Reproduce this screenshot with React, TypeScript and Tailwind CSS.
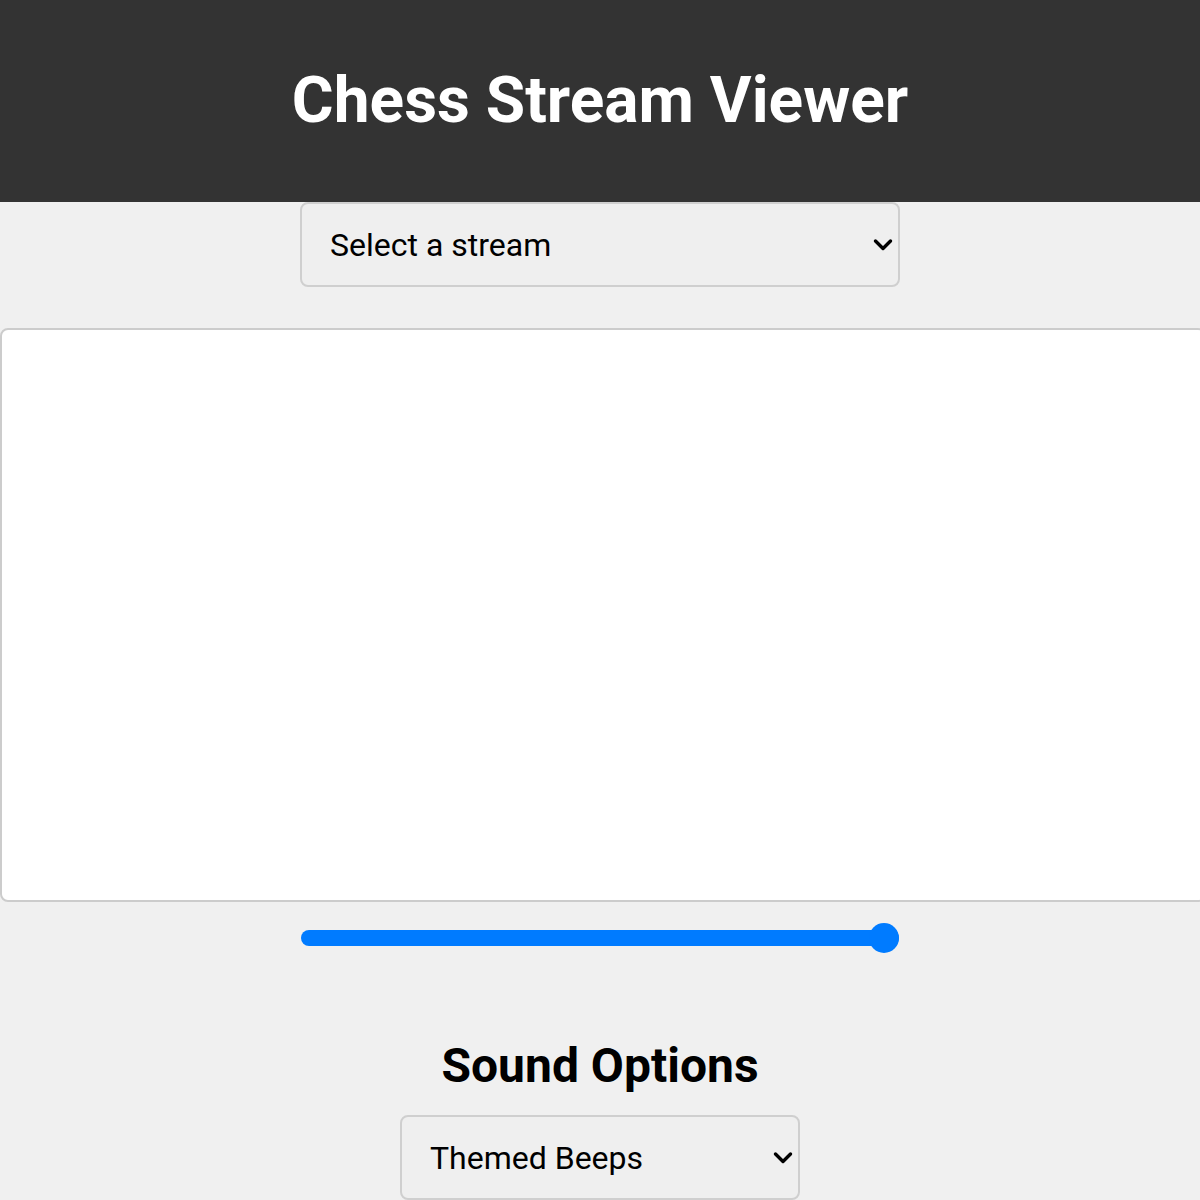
import React from 'react';

const Chevron = () => (
    <svg viewBox="0 0 20 13" className="w-[20px] h-[13px] pointer-events-none" fill="none">
        <path d="M2.5 2.5 L10 10 L17.5 2.5" stroke="#000" strokeWidth="3.4" strokeLinecap="round" strokeLinejoin="round"/>
    </svg>
);

const StreamSelect = ({label, width}: {label: string; width: string}) => (
    <div className={`relative mx-auto ${width} h-[85px]`}>
        <select
            defaultValue=""
            className="appearance-none w-full h-full bg-[#efefef] border-2 border-[#cfcfcf] rounded-[8px] pl-[28px] text-[32px] text-black outline-none"
        >
            <option value="">{label}</option>
        </select>
        <div className="absolute top-1/2 -translate-y-1/2 right-[7px] flex">
            <Chevron/>
        </div>
    </div>
);

export default function App() {
    return (
        <div className="h-screen overflow-hidden bg-[#f0f0f0] font-['Roboto','Liberation_Sans',sans-serif]">
            <header className="h-[202px] bg-[#333333] flex items-center justify-center">
                <h1 className="text-white text-[64px] font-bold leading-none">Chess Stream Viewer</h1>
            </header>

            <StreamSelect label="Select a stream" width="w-[600px]"/>

            <div className="mt-[41px] w-[1206px] h-[574px] bg-white border-2 border-[#cccccc] rounded-[8px]"/>

            <div className="relative mx-auto mt-[21px] w-[598px] h-[30px] flex items-center">
                <div className="w-full h-[16px] rounded-full bg-[#007bff]"/>
                <div className="absolute right-0 top-0 w-[30px] h-[30px] rounded-full bg-[#007bff]"/>
            </div>

            <h2 className="mt-[85px] text-center text-[48px] leading-[56px] font-bold text-black">Sound Options</h2>

            <div className="mt-[21px]">
                <StreamSelect label="Themed Beeps" width="w-[400px]"/>
            </div>
        </div>
    );
}
